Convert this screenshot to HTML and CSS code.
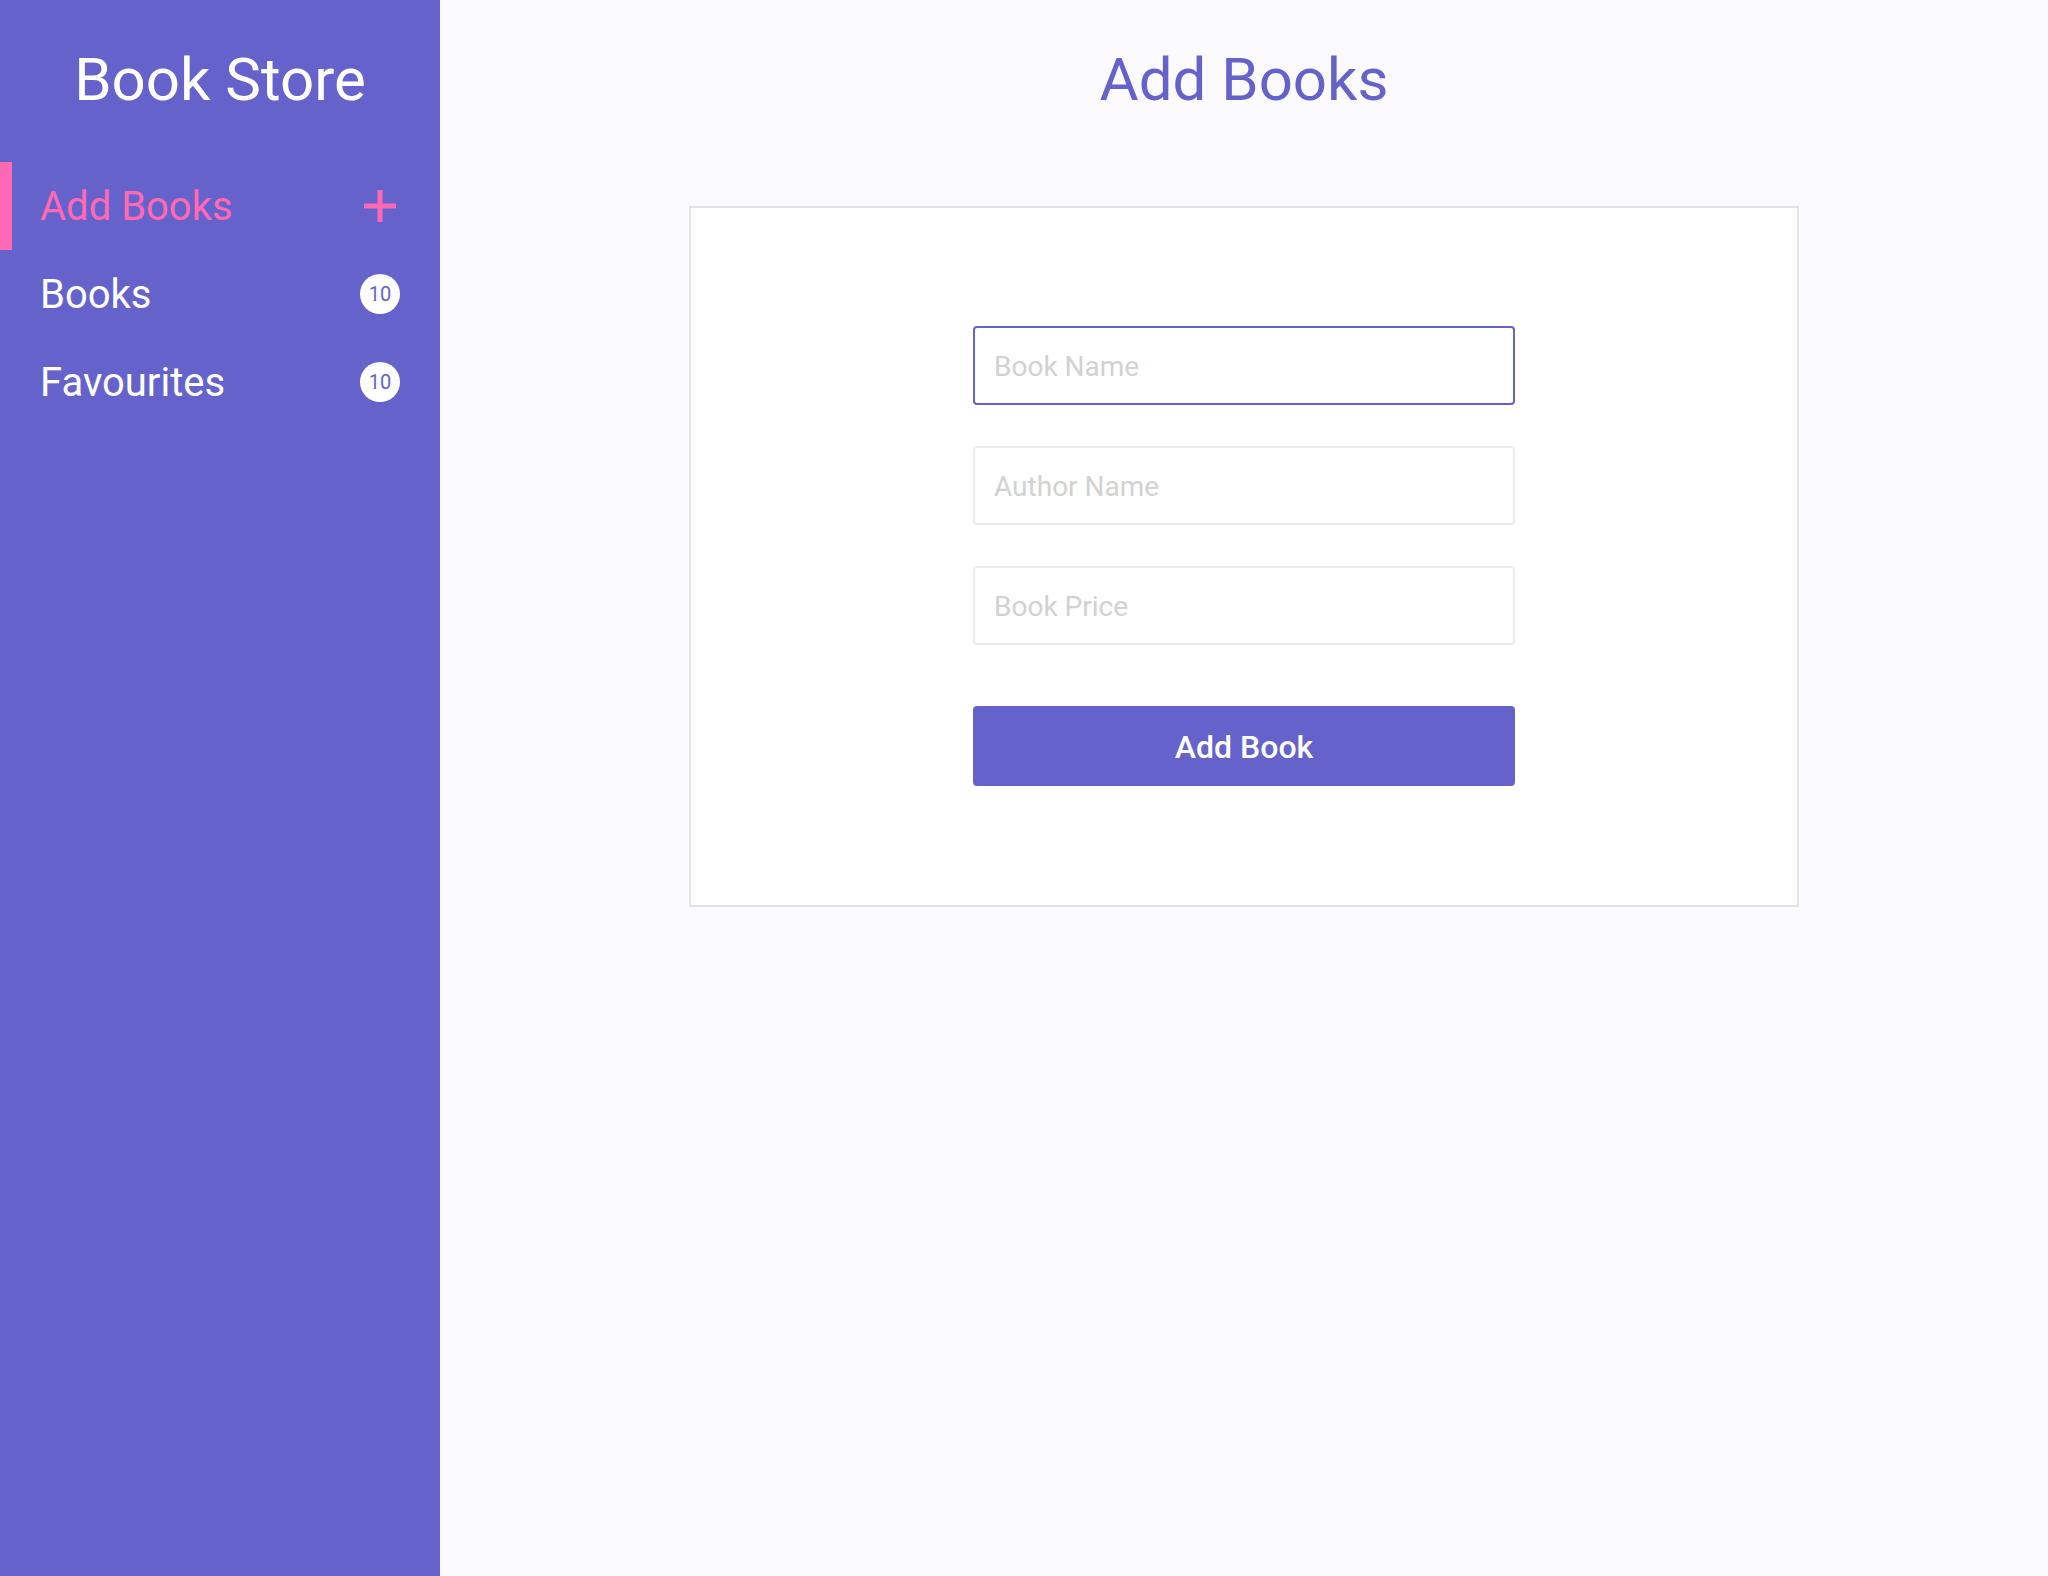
FILE: index.html
```html
<!DOCTYPE html>
<html lang="en">
<head>
<meta charset="utf-8">
<title>Book Store</title>
<link rel="stylesheet" href="styles.css">
</head>
<body>
<div class="app">
  <aside class="sidebar">
    <div class="brand">Book Store</div>
    <nav class="nav">
      <a class="nav-item active" href="#">
        <span class="nav-label">Add Books</span>
        <svg class="plus" width="32" height="32" viewBox="0 0 32 32" aria-hidden="true">
          <rect x="13.5" y="0" width="5" height="32" fill="#ff69b4"/>
          <rect x="0" y="13.5" width="32" height="5" fill="#ff69b4"/>
        </svg>
      </a>
      <a class="nav-item" href="#">
        <span class="nav-label">Books</span>
        <span class="badge">10</span>
      </a>
      <a class="nav-item" href="#">
        <span class="nav-label">Favourites</span>
        <span class="badge">10</span>
      </a>
    </nav>
  </aside>
  <main class="main">
    <h1 class="page-title">Add Books</h1>
    <form class="card">
      <input class="field focused" type="text" placeholder="Book Name">
      <input class="field" type="text" placeholder="Author Name">
      <input class="field" type="text" placeholder="Book Price">
      <button class="submit" type="button">Add Book</button>
    </form>
  </main>
</div>
</body>
</html>
```

FILE: styles.css
```css
* { box-sizing: border-box; }

html, body {
  margin: 0;
  padding: 0;
  height: 100%;
}

body {
  font-family: Roboto, "Liberation Sans", sans-serif;
  background: #fbfbff;
}

.app {
  display: flex;
  min-height: 1576px;
}

.sidebar {
  width: 440px;
  flex-shrink: 0;
  background: #6563cb;
  display: flex;
  flex-direction: column;
}

.brand {
  color: #ffffff;
  font-size: 60px;
  line-height: 70px;
  text-align: center;
  padding-top: 45px;
  height: 162px;
}

.nav {
  display: flex;
  flex-direction: column;
}

.nav-item {
  height: 88px;
  display: flex;
  align-items: center;
  justify-content: space-between;
  padding: 0 40px 0 28px;
  color: #ffffff;
  text-decoration: none;
  font-size: 40px;
  border-left: 12px solid transparent;
}

.nav-item.active {
  border-left-color: #ff69b4;
  color: #ff69b4;
}

.plus {
  display: block;
  margin-right: 4px;
}

.badge {
  width: 40px;
  height: 40px;
  border-radius: 50%;
  background: #ffffff;
  color: #6563cb;
  font-size: 20px;
  display: flex;
  align-items: center;
  justify-content: center;
}

.main {
  flex: 1;
  display: flex;
  flex-direction: column;
  align-items: center;
}

.page-title {
  margin: 0;
  padding-top: 45px;
  font-size: 60px;
  line-height: 70px;
  font-weight: 400;
  color: #6563cb;
}

.card {
  margin-top: 91px;
  width: 1110px;
  background: #ffffff;
  border: 2px solid #e2e2e6;
  padding: 118px 0 119px;
  display: flex;
  flex-direction: column;
  align-items: center;
}

.field {
  width: 542px;
  height: 79px;
  border: 2px solid #ebebeb;
  border-radius: 4px;
  padding: 2px 19px 0;
  font-family: Roboto, "Liberation Sans", sans-serif;
  font-size: 28px;
  color: #333;
  background: #fff;
  outline: none;
  margin-bottom: 41px;
}

.field::placeholder {
  color: #d2d2d2;
}

.field.focused {
  border-color: #6563cb;
}

.card .field:nth-of-type(3) {
  margin-bottom: 61px;
}

.submit {
  width: 542px;
  height: 80px;
  border: none;
  border-radius: 4px;
  background: #6563cb;
  color: #ffffff;
  font-family: Roboto, "Liberation Sans", sans-serif;
  font-size: 32px;
  font-weight: 500;
  padding-top: 3px;
}
```
